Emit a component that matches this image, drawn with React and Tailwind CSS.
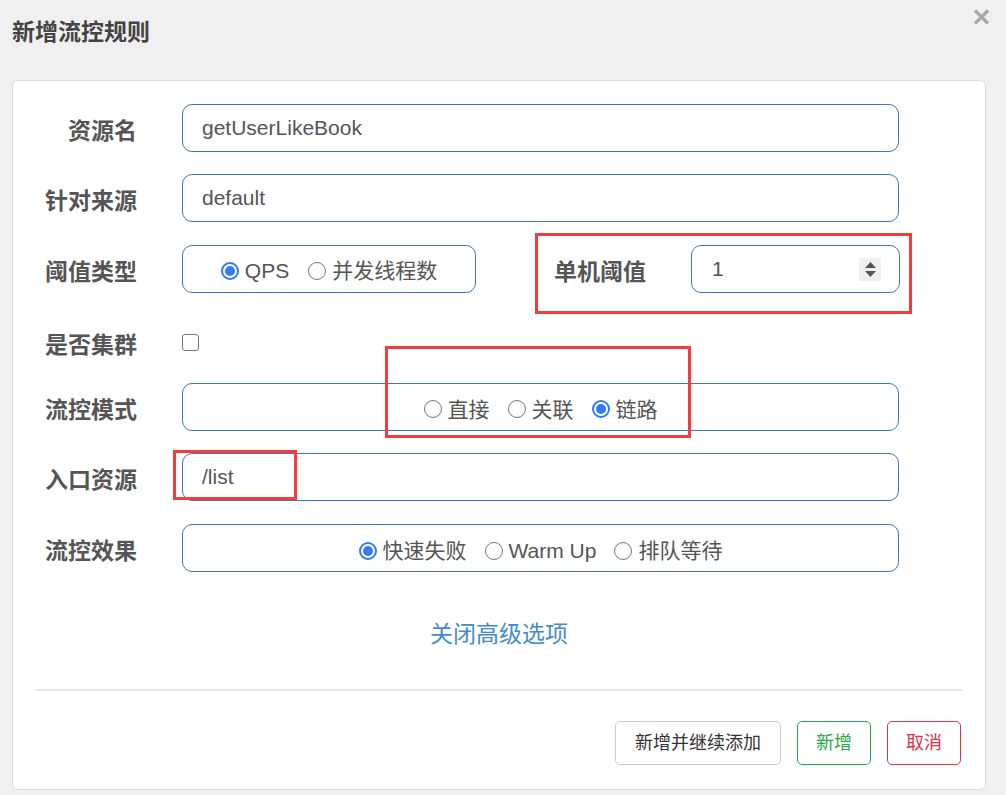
import React from 'react';

function Radio({ checked, label }) {
  return (
    <label className="flex items-center gap-[6px]">
      {checked ? (
        <span className="w-[18px] h-[18px] rounded-full border-[2px] border-[#2f7cf6] flex items-center justify-center">
          <span className="w-[10px] h-[10px] rounded-full bg-[#2f7cf6]"></span>
        </span>
      ) : (
        <span className="w-[18px] h-[18px] rounded-full border-[1.5px] border-[#767676] bg-white"></span>
      )}
      <span>{label}</span>
    </label>
  );
}

function Label({ children, className = '' }) {
  return (
    <div className={`pt-[6px] text-[23px] font-bold text-[#555] whitespace-nowrap ${className}`}>{children}</div>
  );
}

const box = 'h-[48px] rounded-[10px] border border-[#3c78b5] bg-white';

function App() {
  return (
    <div className="relative w-[1006px] min-h-[795px] bg-[#f0f0f0] font-[family-name:Liberation_Sans,Noto_Sans_CJK_SC,sans-serif] text-[#555] overflow-hidden">
      {/* Header */}
      <div className="flex justify-between items-start h-[80px] pl-[12px] pr-[16px]">
        <h1 className="mt-[16px] text-[23px] leading-[32px] font-bold text-[#444]">新增流控规则</h1>
        <svg className="mt-[9px]" width="17" height="16" viewBox="0 0 17 16">
          <path d="M2 1.5 L15 14.5 M15 1.5 L2 14.5" stroke="#a8a8a8" strokeWidth="3.2" strokeLinecap="butt" />
        </svg>
      </div>

      {/* Card */}
      <div className="ml-[12px] w-[974px] h-[710px] bg-white border border-[#dcdcdc] rounded-[6px] pt-[23px] flex flex-col">
        <div className="flex flex-col">
          {/* 资源名 */}
          <div className="flex items-center gap-[45px]">
            <Label className="w-[124px] text-right">资源名</Label>
            <div className={`${box} w-[717px] flex items-center px-[19px] text-[21px]`}>getUserLikeBook</div>
          </div>
          {/* 针对来源 */}
          <div className="mt-[22px] flex items-center gap-[45px]">
            <Label className="w-[124px] text-right">针对来源</Label>
            <div className={`${box} w-[717px] flex items-center px-[19px] text-[21px]`}>default</div>
          </div>
          {/* 阈值类型 */}
          <div className="mt-[23px] flex items-center">
            <Label className="w-[124px] text-right">阈值类型</Label>
            <div className={`${box} ml-[45px] w-[294px] flex items-center justify-center gap-[19px] pt-[4px] text-[21px]`}>
              <Radio checked label="QPS" />
              <Radio label="并发线程数" />
            </div>
            <Label className="ml-[78px]">单机阈值</Label>
            <div className={`${box} ml-[45px] w-[209px] flex items-center justify-between pl-[20px] pr-[18px] text-[21px]`}>
              <span>1</span>
              <span className="w-[22px] h-[23px] bg-[#f0f0f0] flex flex-col items-center justify-center gap-[3px]">
                <svg width="11" height="6" viewBox="0 0 11 6"><path d="M5.5 0 L11 6 L0 6 Z" fill="#555" /></svg>
                <svg width="11" height="6" viewBox="0 0 11 6"><path d="M0 0 L11 0 L5.5 6 Z" fill="#555" /></svg>
              </span>
            </div>
          </div>
          {/* 是否集群 */}
          <div className="mt-[22px] flex items-center gap-[45px] h-[46px] pt-[8px]">
            <Label className="w-[124px] text-right">是否集群</Label>
            <span className="w-[17px] h-[17px] rounded-[3px] border-[1.5px] border-[#767676] bg-white"></span>
          </div>
          {/* 流控模式 */}
          <div className="mt-[22px] flex items-center gap-[45px]">
            <Label className="w-[124px] text-right">流控模式</Label>
            <div className={`${box} w-[717px] flex items-end justify-center gap-[18px] pb-[5px] text-[21px]`}>
              <Radio label="直接" />
              <Radio label="关联" />
              <Radio checked label="链路" />
            </div>
          </div>
          {/* 入口资源 */}
          <div className="mt-[22px] flex items-center gap-[45px]">
            <Label className="w-[124px] text-right">入口资源</Label>
            <div className={`${box} w-[717px] flex items-center px-[19px] text-[21px]`}>/list</div>
          </div>
          {/* 流控效果 */}
          <div className="mt-[23px] flex items-center gap-[45px]">
            <Label className="w-[124px] text-right">流控效果</Label>
            <div className={`${box} w-[717px] flex items-center justify-center gap-[18px] pt-[6px] text-[21px]`}>
              <Radio checked label="快速失败" />
              <Radio label="Warm Up" />
              <Radio label="排队等待" />
            </div>
          </div>
        </div>

        <div className="mt-[47px] text-center text-[23px] leading-[30px] text-[#428bca]">关闭高级选项</div>

        <div className="mx-[23px] mt-[40px] h-[2px] bg-[#e5e5e5]"></div>

        <div className="mt-[30px] mr-[24px] flex justify-end gap-[16px] text-[18px]">
          <button className="h-[44px] px-[19px] rounded-[5px] border border-[#ccc] bg-white text-[#333]">新增并继续添加</button>
          <button className="h-[44px] px-[18px] rounded-[5px] border border-[#28a745] bg-white text-[#28a745]">新增</button>
          <button className="h-[44px] px-[18px] rounded-[5px] border border-[#dc3545] bg-white text-[#dc3545]">取消</button>
        </div>
      </div>

      {/* Red annotation boxes */}
      <div className="absolute left-[535px] top-[233px] w-[377px] h-[81px] border-[3px] border-[#f53b3b]"></div>
      <div className="absolute left-[385px] top-[346px] w-[306px] h-[92px] border-[3px] border-[#f53b3b]"></div>
      <div className="absolute left-[173px] top-[450px] w-[124px] h-[50px] border-[3px] border-[#f53b3b]"></div>
    </div>
  );
}

export default App;
